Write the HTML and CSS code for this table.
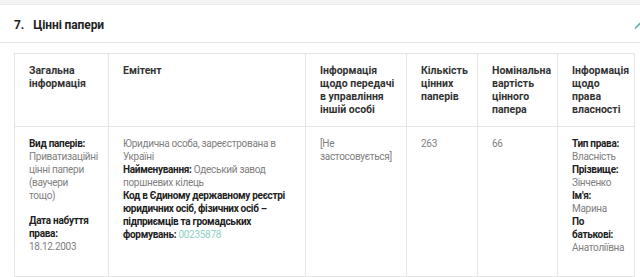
FILE: index.html
```html
<!DOCTYPE html>
<html lang="uk">
<head>
<meta charset="utf-8">
<link rel="stylesheet" href="styles.css">
</head>
<body>
<div class="top-band"></div>
<section class="section">
  <div class="section-head">
    <h2 class="section-title"><span class="num">7.</span>Цінні папери</h2>
    <svg class="chev" width="12" height="8" viewBox="0 0 12 8"><path d="M1 6.5 L6 1.5 L11 6.5" fill="none" stroke="#5fb3a8" stroke-width="1.6"/></svg>
  </div>
  <div class="table-wrap">
    <table class="tbl">
      <colgroup>
        <col style="width:94px"><col style="width:197px"><col style="width:101px"><col style="width:71px"><col style="width:80px"><col style="width:77px">
      </colgroup>
      <thead>
        <tr>
          <th>Загальна інформація</th>
          <th>Емітент</th>
          <th>Інформація щодо передачі в управління іншій особі</th>
          <th>Кількість цінних паперів</th>
          <th>Номінальна вартість цінного папера</th>
          <th class="last">Інформація щодо права власності</th>
        </tr>
      </thead>
      <tbody>
        <tr>
          <td>
            <b>Вид паперів:</b><br>Приватизаційні цінні папери (ваучери тощо)
            <div class="gap"></div>
            <b>Дата набуття права:</b><br>18.12.2003
          </td>
          <td>
            Юридична особа, зареєстрована в Україні<br>
            <b>Найменування:</b> Одеський завод поршневих кілець<br>
            <b>Код в Єдиному державному реєстрі юридичних осіб, фізичних осіб – підприємців та громадських формувань:</b> <span class="link">00235878</span>
          </td>
          <td>[Не застосовується]</td>
          <td>263</td>
          <td>66</td>
          <td>
            <b>Тип права:</b><br>Власність<br>
            <b>Прізвище:</b><br>Зінченко<br>
            <b>Ім'я:</b><br>Марина<br>
            <b>По батькові:</b><br>Анатоліївна
          </td>
        </tr>
      </tbody>
    </table>
  </div>
</section>
</body>
</html>
```

FILE: styles.css
```css
html, body {
  margin: 0;
  padding: 0;
  background: #fff;
  overflow: hidden;
  width: 640px;
  height: 277px;
  font-family: Roboto, "Liberation Sans", sans-serif;
}
.top-band {
  height: 4px;
  background: #f3f3f3;
  border-bottom: 1px solid #ebebeb;
}
.section-head {
  display: flex;
  align-items: center;
  justify-content: space-between;
  height: 35px;
  padding: 2px 0 0 14px;
  border-bottom: 1px solid #e8e8e8;
  margin-right: -6px;
}
.section-title {
  margin: 0;
  font-size: 12px;
  letter-spacing: -0.1px;
  font-weight: 700;
  color: #222;
}
.num {
  margin-right: 9px;
}
.chev {
  display: block;
  margin-top: 2px;
}
.table-wrap {
  padding: 10px 6px 0 14px;
}
.tbl {
  border-collapse: collapse;
  table-layout: fixed;
  width: 620px;
  font-size: 10px;
  letter-spacing: -0.3px;
  line-height: 13px;
}
.tbl th, .tbl td {
  border: 1px solid #e6e6e6;
  vertical-align: top;
  text-align: left;
  padding: 10px 13px 10px 14px;
}
.tbl th {
  font-size: 10.5px;
  letter-spacing: 0;
  font-weight: 700;
  color: #333;
  padding-right: 10px;
}
.tbl th.last {
  padding-right: 8px;
}
.tbl td {
  color: #808080;
  padding-bottom: 22px;
}
.tbl td b {
  color: #222;
  font-weight: 700;
}
.gap {
  height: 12px;
}
.link {
  color: #8fcfc8;
}
```
